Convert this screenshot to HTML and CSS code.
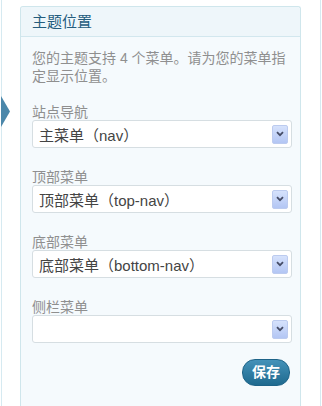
FILE: index.html
```html
<!DOCTYPE html>
<html lang="zh-CN">
<head>
<meta charset="utf-8">
<title>主题位置</title>
<link rel="stylesheet" href="styles.css">
</head>
<body>
<div class="frame">
  <svg class="pointer" width="10" height="31" viewBox="0 0 10 31"><polygon points="0,0 9,15.5 0,31" fill="#4b87aa"/></svg>
  <div class="card">
    <div class="card-head">主题位置</div>
    <div class="card-body">
      <p class="intro">您的主题支持 4 个菜单。请为您的菜单指定显示位置。</p>
      <div class="field">
        <div class="label">站点导航</div>
        <div class="select"><span class="value">主菜单（nav）</span><span class="caret"><svg width="8" height="6" viewBox="0 0 8 6"><path d="M1 1.2 L4 4.2 L7 1.2" fill="none" stroke="#454c66" stroke-width="1.8"/></svg></span></div>
      </div>
      <div class="field">
        <div class="label">顶部菜单</div>
        <div class="select"><span class="value">顶部菜单（top-nav）</span><span class="caret"><svg width="8" height="6" viewBox="0 0 8 6"><path d="M1 1.2 L4 4.2 L7 1.2" fill="none" stroke="#454c66" stroke-width="1.8"/></svg></span></div>
      </div>
      <div class="field">
        <div class="label">底部菜单</div>
        <div class="select"><span class="value">底部菜单（bottom-nav）</span><span class="caret"><svg width="8" height="6" viewBox="0 0 8 6"><path d="M1 1.2 L4 4.2 L7 1.2" fill="none" stroke="#454c66" stroke-width="1.8"/></svg></span></div>
      </div>
      <div class="field">
        <div class="label">侧栏菜单</div>
        <div class="select"><span class="value"></span><span class="caret"><svg width="8" height="6" viewBox="0 0 8 6"><path d="M1 1.2 L4 4.2 L7 1.2" fill="none" stroke="#454c66" stroke-width="1.8"/></svg></span></div>
      </div>
      <div class="actions"><button class="save" type="button">保存</button></div>
    </div>
  </div>
</div>
</body>
</html>
```
FILE: styles.css
```css
html, body {
  margin: 0;
  padding: 0;
  background: #ffffff;
  overflow: hidden;
}
body {
  font-family: "Liberation Sans", "Noto Sans CJK SC", sans-serif;
  font-size: 14px;
  color: #333;
}
.frame {
  position: relative;
  box-sizing: border-box;
  width: 320px;
  height: 406px;
  margin-left: 1px;
  border-left: 1px solid #d6eaf1;
  border-right: 1px solid #d6eaf1;
  padding: 6px 0 0 18px;
}
.pointer {
  position: absolute;
  left: -1px;
  top: 96px;
  display: block;
}
.card {
  box-sizing: border-box;
  width: 281px;
  height: 400px;
  border: 1px solid #cfe6ec;
  border-bottom: none;
  border-radius: 3px 3px 0 0;
  background: #f5fafd;
}
.card-head {
  height: 29px;
  line-height: 29px;
  padding-left: 11px;
  font-size: 15px;
  color: #245d7e;
  background: #eef6fa;
  border-bottom: 1px solid #d2e7ee;
  border-radius: 3px 3px 0 0;
}
.card-body {
  padding: 12px 8px 0 11px;
}
.intro {
  margin: 0;
  font-size: 14px;
  line-height: 18px;
  color: #8f8f8f;
}
.field {
  margin-top: 19px;
}
.field + .field {
  margin-top: 21px;
}
.label {
  font-size: 14px;
  line-height: 16px;
  color: #8f8f8f;
}
.select {
  box-sizing: border-box;
  display: flex;
  align-items: center;
  width: 260px;
  height: 28px;
  background: #fff;
  border: 1px solid #d6dee2;
  border-radius: 3px;
}
.value {
  flex: 1;
  padding-left: 6px;
  font-size: 15px;
  color: #444;
  white-space: nowrap;
}
.caret {
  box-sizing: border-box;
  display: flex;
  align-items: center;
  justify-content: center;
  width: 16px;
  height: 19px;
  margin-right: 3px;
  background: linear-gradient(#d6e2fc, #b3c6f4);
  border: 1px solid #bccbef;
  border-radius: 2px;
}
.caret svg {
  display: block;
}
.actions {
  display: flex;
  justify-content: flex-end;
  margin-top: 16px;
  padding-right: 2px;
}
.save {
  box-sizing: border-box;
  width: 48px;
  height: 27px;
  padding: 0;
  border: 1px solid #1d6388;
  border-radius: 13px;
  background: linear-gradient(#4492b9, #1f6a8f);
  color: #fff;
  font-family: "Liberation Sans", "Noto Sans CJK SC", sans-serif;
  font-size: 14px;
  font-weight: bold;
  line-height: 25px;
}
```
